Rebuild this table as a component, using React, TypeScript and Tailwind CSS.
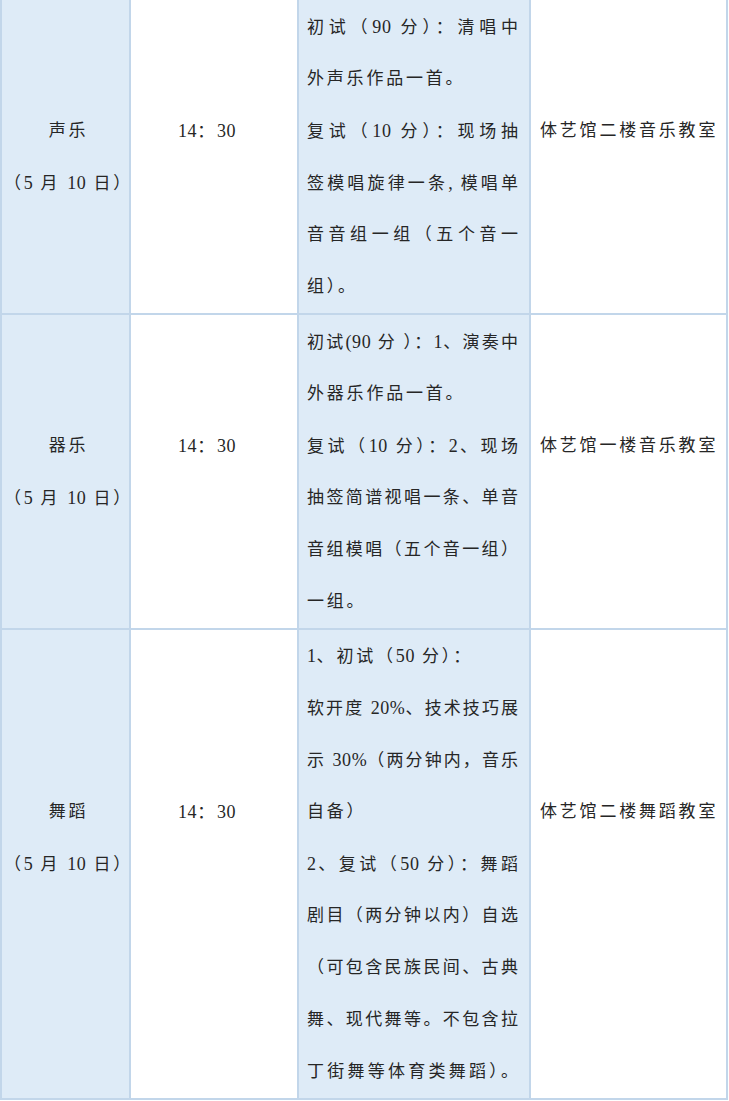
import React from "react"

type Row = {
  name: string[]
  time: string[]
  content: string[]
  place: string[]
}

// content lines starting with "~" end a paragraph and are not stretched
const rows: Row[] = [
  {
    name: ["声乐", "（5 月 10 日）"],
    time: ["14：30", ""],
    content: [
      "初试（90 分）：清唱中",
      "~外声乐作品一首。",
      "复试（10 分）：现场抽",
      "签模唱旋律一条, 模唱单",
      "音音组一组（五个音一",
      "~组）。",
    ],
    place: ["体艺馆二楼音乐教室", ""],
  },
  {
    name: ["器乐", "（5 月 10 日）"],
    time: ["14：30", ""],
    content: [
      "初试(90 分 ）：1、演奏中",
      "~外器乐作品一首。",
      "复试（10 分）：2、现场",
      "抽签简谱视唱一条、单音",
      "音组模唱（五个音一组）",
      "~一组。",
    ],
    place: ["体艺馆一楼音乐教室", ""],
  },
  {
    name: ["舞蹈", "（5 月 10 日）", ""],
    time: ["14：30", "", ""],
    content: [
      "~1、初试（50 分）：",
      "软开度 20%、技术技巧展",
      "示 30%（两分钟内，音乐",
      "~自备）",
      "2、复试（50 分）：舞蹈",
      "剧目（两分钟以内）自选",
      "（可包含民族民间、古典",
      "舞、现代舞等。不包含拉",
      "丁街舞等体育类舞蹈）。",
    ],
    place: ["体艺馆二楼舞蹈教室", "", ""],
  },
]

// digits and latin bits sit tighter than the CJK glyphs
function Text({ s }: { s: string }) {
  const parts = s.split(/([0-9%(),]+)/)
  return (
    <>
      {parts.map((p, i) =>
        /^[0-9%(),]+$/.test(p) ? (
          <span key={i} className="tracking-[0.6px] text-[18px]">
            {p}
          </span>
        ) : (
          <span key={i}>{p}</span>
        )
      )}
    </>
  )
}

function Lines({ lines, stretch }: { lines: string[]; stretch?: boolean }) {
  return (
    <>
      {lines.map((l, i) => {
        const natural = l.startsWith("~")
        const text = natural ? l.slice(1) : l
        return (
          <div
            key={i}
            className={
              stretch && !natural
                ? "h-[52px] leading-[52px] whitespace-nowrap text-justify [text-align-last:justify] tracking-[2px]"
                : "h-[52px] leading-[52px] whitespace-nowrap"
            }
          >
            {text ? <Text s={text} /> : "\u00a0"}
          </div>
        )
      })}
    </>
  )
}

export default function App() {
  return (
    <div className="w-[729px] h-[1101px] bg-white text-[17px] tracking-[2.8px] text-[#262626] font-['Liberation_Serif','Noto_Sans_CJK_SC',serif]">
      <div className="w-[728px] grid grid-cols-[127px_166px_230px_195px] grid-rows-[313px_313px_468px] gap-[2px] pl-[2px] pr-[2px] pb-[2px] bg-[#c2d6ea]">
        {rows.map((r, i) => (
          <React.Fragment key={i}>
            <div className="bg-[#deebf7] flex flex-col justify-center items-center pl-[6px]">
              <Lines lines={r.name} />
            </div>
            <div className="bg-white flex flex-col justify-center pl-[47px]">
              <Lines lines={r.time} />
            </div>
            <div className="bg-[#deebf7] flex flex-col justify-center pl-[8px] pr-[9px]">
              <Lines lines={r.content} stretch />
            </div>
            <div className="bg-white flex flex-col justify-center pl-[9px]">
              <Lines lines={r.place} />
            </div>
          </React.Fragment>
        ))}
      </div>
    </div>
  )
}
